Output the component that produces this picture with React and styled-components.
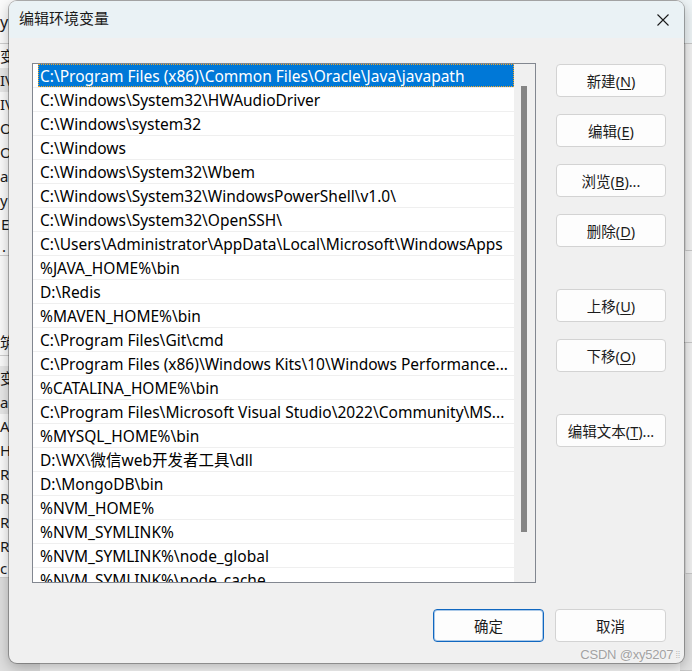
import React from "react";
import styled, { createGlobalStyle } from "styled-components";

const GlobalStyle = createGlobalStyle`
  html, body { margin: 0; padding: 0; }
  body { font-family: "Noto Sans", "Noto Sans CJK SC", sans-serif; }
`;

const FONT = `"Noto Sans", "Noto Sans CJK SC", sans-serif`;

const Desktop = styled.div`
  position: relative;
  width: 692px;
  height: 671px;
  overflow: hidden;
  background: #e6e6e6;
`;

/* ---------- window behind the dialog ---------- */
const BackWindow = styled.div`
  position: absolute;
  inset: 0;
  display: flex;
  justify-content: space-between;
  background: #f3f3f3;
`;

const LeftStrip = styled.div`
  width: 40px;
  display: flex;
  flex-direction: column;
  background: #fbfbfb;
  font-family: ${FONT};
  font-size: 15px;
  color: #1a1a1a;
`;

const StripRow = styled.div`
  height: ${(p) => p.$h}px;
  line-height: ${(p) => p.$h}px;
  background: ${(p) => (p.$shade ? "#e8e8e8" : "transparent")};
  border-bottom: ${(p) => (p.$line ? "1px solid #cfcfcf" : "none")};
  margin-top: ${(p) => p.$mt || 0}px;
  padding-left: ${(p) => p.$x || 0}px;
  font-size: ${(p) => p.$fs || 15}px;
  white-space: nowrap;
  box-sizing: border-box;
`;

const StripFill = styled.div`
  flex: 1;
  background: #dedede;
`;

const RightStrip = styled.div`
  width: 12px;
  display: flex;
  flex-direction: column;
  background: #f1f1f1;
`;

const RightBlock = styled.div`
  height: ${(p) => p.$h}px;
  box-sizing: border-box;
  border-bottom: 1px solid #c8c8c8;
  border-left: ${(p) => (p.$vline ? "1px solid #dcdcdc" : "none")};
  margin-left: ${(p) => (p.$vline ? 5 : 0)}px;
  background: ${(p) => p.$bg || "transparent"};
`;

/* ---------- dialog ---------- */
const Dialog = styled.div`
  position: absolute;
  left: 9px;
  top: 1px;
  width: 675px;
  height: 662px;
  border-radius: 8px;
  overflow: hidden;
  background: #f0f0f0;
  box-shadow: 0 0 0 1px rgba(0, 0, 0, 0.28), 0 4px 14px rgba(0, 0, 0, 0.28);
  display: flex;
  flex-direction: column;
  font-family: ${FONT};
`;

const TitleBar = styled.div`
  height: 37px;
  flex: none;
  display: flex;
  align-items: center;
  justify-content: space-between;
  background: #eaf2f5;
  padding-left: 10px;
`;

const Title = styled.div`
  font-size: 15px;
  line-height: 18px;
  padding-bottom: 3px;
  color: #1a1a1a;
`;

const CloseButton = styled.div`
  width: 42px;
  height: 37px;
  display: flex;
  align-items: center;
  justify-content: center;
`;

const Body = styled.div`
  flex: 1;
  display: flex;
  flex-direction: column;
  padding: 25px 18px 21px 23px;
`;

const Main = styled.div`
  display: flex;
  gap: 20px;
`;

const ListBox = styled.div`
  width: 504px;
  height: 520px;
  box-sizing: border-box;
  border: 1px solid #828790;
  background: #ffffff;
  display: flex;
  overflow: hidden;
`;

const Items = styled.div`
  width: 481px;
  display: flex;
  flex-direction: column;
  overflow: hidden;
`;

const Row = styled.div`
  height: 24px;
  flex: none;
  box-sizing: border-box;
  border-bottom: 1px solid #efefef;
  display: flex;
`;

const RowLabel = styled.div`
  flex: 1;
  min-width: 0;
  margin-left: 5px;
  padding: 2px 3px 0 2px;
  line-height: 21px;
  font-size: 15.5px;
  white-space: nowrap;
  overflow: hidden;
  text-overflow: ellipsis;
  color: ${(p) => (p.$selected ? "#ffffff" : "#000000")};
  background: ${(p) => (p.$selected ? "#0078d7" : "transparent")};
  outline: ${(p) => (p.$selected ? "1px dotted #f5a623" : "none")};
  outline-offset: -1px;
`;

const Track = styled.div`
  width: 21px;
  background: #f0f0f0;
  padding: 22px 0 0 7px;
  box-sizing: border-box;
`;

const Thumb = styled.div`
  width: 6px;
  height: 446px;
  background: #858585;
`;

const SideColumn = styled.div`
  display: flex;
  flex-direction: column;
  margin-top: 1px;
`;

const Button = styled.div`
  width: ${(p) => p.$w || 110}px;
  height: 33px;
  margin-top: ${(p) => p.$mt || 0}px;
  box-sizing: border-box;
  border: 1px solid ${(p) => (p.$primary ? "#1067c0" : "#d3d3d3")};
  box-shadow: ${(p) =>
    p.$primary ? "inset 0 0 0 1px rgba(16,103,192,0.35)" : "none"};
  border-radius: 4px;
  background: #fdfdfd;
  display: flex;
  align-items: center;
  justify-content: center;
  font-size: 14.5px;
  color: #1b1b1b;
  white-space: nowrap;
  u {
    text-decoration-thickness: 1px;
    text-underline-offset: 2px;
  }
`;

const Footer = styled.div`
  display: flex;
  justify-content: flex-end;
  gap: 11px;
  margin-top: 26px;
`;

const Watermark = styled.div`
  position: absolute;
  right: 12px;
  bottom: 9px;
  font-family: "Liberation Sans", Arial, sans-serif;
  font-size: 13px;
  color: #a2a2a2;
  text-shadow: 0 0 2px #ffffff;
  letter-spacing: -0.2px;
  display: flex;
  align-items: center;
  gap: 2px;
`;

const Dots = styled.span`
  font-size: 9px;
  color: #b0b0b0;
`;

const paths = [
  "C:\\Program Files (x86)\\Common Files\\Oracle\\Java\\javapath",
  "C:\\Windows\\System32\\HWAudioDriver",
  "C:\\Windows\\system32",
  "C:\\Windows",
  "C:\\Windows\\System32\\Wbem",
  "C:\\Windows\\System32\\WindowsPowerShell\\v1.0\\",
  "C:\\Windows\\System32\\OpenSSH\\",
  "C:\\Users\\Administrator\\AppData\\Local\\Microsoft\\WindowsApps",
  "%JAVA_HOME%\\bin",
  "D:\\Redis",
  "%MAVEN_HOME%\\bin",
  "C:\\Program Files\\Git\\cmd",
  "C:\\Program Files (x86)\\Windows Kits\\10\\Windows Performance...",
  "%CATALINA_HOME%\\bin",
  "C:\\Program Files\\Microsoft Visual Studio\\2022\\Community\\MS...",
  "%MYSQL_HOME%\\bin",
  "D:\\WX\\微信web开发者工具\\dll",
  "D:\\MongoDB\\bin",
  "%NVM_HOME%",
  "%NVM_SYMLINK%",
  "%NVM_SYMLINK%\\node_global",
  "%NVM_SYMLINK%\\node_cache",
];

const leftRows = [
  { t: "y", h: 44, x: 0, fs: 16, line: true },
  { t: "变量", h: 24, x: -5 },
  { t: "IV", h: 24, x: 0, shade: true },
  { t: "IV", h: 24, x: 0 },
  { t: "Or", h: 24, x: -1 },
  { t: "Or", h: 24, x: -1 },
  { t: "a", h: 24, x: 0 },
  { t: "y", h: 24, x: 0 },
  { t: "E", h: 24, x: 1 },
  { t: ".", h: 20, x: 2, line: true },
  { t: "筑", h: 28, x: -6, mt: 72, line: true },
  { t: "变", h: 24, x: -7, mt: 10, shade: true },
  { t: "a", h: 24, x: 0, shade: true },
  { t: "A", h: 24, x: 0 },
  { t: "H", h: 24, x: 0 },
  { t: "R", h: 24, x: 0 },
  { t: "R", h: 24, x: 0 },
  { t: "R", h: 24, x: 0 },
  { t: "R", h: 24, x: 0 },
  { t: "c", h: 20, x: 0, line: true },
];

const sideButtons = [
  { label: "新建", key: "N", mt: 0 },
  { label: "编辑", key: "E", mt: 17 },
  { label: "浏览", key: "B", mt: 17, dots: true },
  { label: "删除", key: "D", mt: 17 },
  { label: "上移", key: "U", mt: 42 },
  { label: "下移", key: "O", mt: 17 },
  { label: "编辑文本", key: "T", mt: 42, dots: true },
];

const CloseIcon = () => (
  <svg width="12" height="12" viewBox="0 0 12 12">
    <path
      d="M0.5 0.5 L11.5 11.5 M11.5 0.5 L0.5 11.5"
      stroke="#1a1a1a"
      strokeWidth="1.1"
      fill="none"
    />
  </svg>
);

export default function App() {
  return (
    <Desktop>
      <GlobalStyle />
      <BackWindow>
        <LeftStrip>
          {leftRows.map((r, i) => (
            <StripRow
              key={i}
              $h={r.h}
              $x={r.x}
              $fs={r.fs}
              $line={r.line}
              $shade={r.shade}
              $mt={r.mt}
            >
              {r.t}
            </StripRow>
          ))}
          <StripFill />
        </LeftStrip>
        <RightStrip>
          <RightBlock $h={44} $bg="#eef4f6" />
          <RightBlock $h={207} $vline />
          <RightBlock $h={92} />
          <RightBlock $h={231} $vline />
          <RightBlock $h={97} $bg="#e2e2e2" />
        </RightStrip>
      </BackWindow>

      <Dialog>
        <TitleBar>
          <Title>编辑环境变量</Title>
          <CloseButton>
            <CloseIcon />
          </CloseButton>
        </TitleBar>
        <Body>
          <Main>
            <ListBox>
              <Items>
                {paths.map((p, i) => (
                  <Row key={i}>
                    <RowLabel $selected={i === 0}>{p}</RowLabel>
                  </Row>
                ))}
              </Items>
              <Track>
                <Thumb />
              </Track>
            </ListBox>
            <SideColumn>
              {sideButtons.map((b) => (
                <Button key={b.key} $mt={b.mt}>
                  {b.label}(<u>{b.key}</u>){b.dots ? "..." : ""}
                </Button>
              ))}
            </SideColumn>
          </Main>
          <Footer>
            <Button $w={111} $primary>
              确定
            </Button>
            <Button $w={111}>取消</Button>
          </Footer>
        </Body>
      </Dialog>
      <Watermark>
        CSDN @xy5207<Dots>⁞⁞</Dots>
      </Watermark>
    </Desktop>
  );
}
